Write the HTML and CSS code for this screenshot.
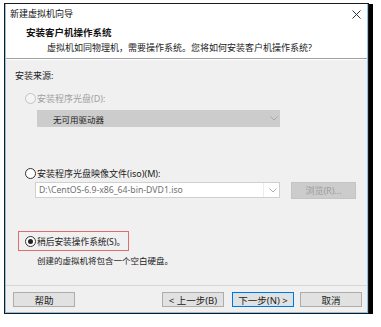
FILE: index.html
```html
<!DOCTYPE html>
<html lang="zh-CN">
<head>
<meta charset="utf-8">
<title>新建虚拟机向导</title>
<link rel="stylesheet" href="styles.css">
</head>
<body>
<div class="stage">
  <div class="win">
    <div class="titlebar">
      <span class="title">新建虚拟机向导</span>
      <svg class="close" width="9" height="9" viewBox="0 0 9 9"><path d="M0.5 0.5L8.5 8.5M8.5 0.5L0.5 8.5" stroke="#333" stroke-width="1" fill="none"/></svg>
    </div>
    <div class="header">
      <div class="h1">安装客户机操作系统</div>
      <div class="h2">虚拟机如同物理机，需要操作系统。您将如何安装客户机操作系统?</div>
    </div>
    <div class="body">
      <div class="label">安装来源:</div>
      <div class="opt disabled"><span class="radio"></span><span>安装程序光盘(D):</span></div>
      <div class="select">
        <span>无可用驱动器</span>
        <svg class="chev" width="8" height="5" viewBox="0 0 8 5"><path d="M0.5 0.5L4 4L7.5 0.5" stroke="#a8a8a8" fill="none"/></svg>
      </div>
      <div class="opt second"><span class="radio"></span><span>安装程序光盘映像文件(iso)(M):</span></div>
      <div class="isorow">
        <div class="combo">
          <span class="path">D:\CentOS-6.9-x86_64-bin-DVD1.iso</span>
          <span class="csep"></span>
          <svg class="chev" width="8" height="5" viewBox="0 0 8 5"><path d="M0.5 0.5L4 4L7.5 0.5" stroke="#b0b0b0" fill="none"/></svg>
        </div>
        <div class="browse">浏览(R)...</div>
      </div>
      <div class="later"><span class="radio checked"></span><span>稍后安装操作系统(S)。</span></div>
      <div class="desc">创建的虚拟机将包含一个空白硬盘。</div>
    </div>
    <div class="footer">
      <div class="btn">帮助</div>
      <div class="spacer"></div>
      <div class="btn">&lt; 上一步(B)</div>
      <div class="btn primary">下一步(N) &gt;</div>
      <div class="btn last">取消</div>
    </div>
  </div>
</div>
</body>
</html>
```

FILE: styles.css
```css
html, body {
  margin: 0;
  padding: 0;
  background: #ffffff;
}
body {
  font-family: "Noto Sans", "Noto Sans CJK SC", sans-serif;
  font-size: 9px;
  color: #222;
}
.stage {
  padding: 3px 0 0 4px;
}
.win {
  width: 363px;
  height: 309px;
  border: 1px solid #1a1a1a;
  box-shadow: inset 0 0 0 1px #8ec1e6, 3px 2px 0 1px #000;
  display: flex;
  flex-direction: column;
  background: #f0f0f0;
}
.titlebar {
  height: 20px;
  flex: none;
  background: #fff;
  display: flex;
  align-items: center;
  padding: 0 0 0 4px;
  margin: 0 1px 0 1px;
}
.title {
  flex: 1;
  line-height: 12px;
  color: #111;
}
.close {
  margin-right: 6px;
}
.header {
  flex: none;
  height: 30px;
  background: #fff;
  padding: 3px 0 1px 20px;
  margin: 0 1px;
  border-bottom: 1px solid #a0a0a0;
  box-shadow: 0 1px 0 #fff;
}
.h1 {
  font-weight: bold;
  font-size: 9.5px;
  line-height: 12px;
  color: #111;
}
.h2 {
  margin: 3px 0 0 21px;
  line-height: 12px;
  color: #222;
}
.body {
  flex: 1;
  padding: 0 0 0 10px;
  margin-top: 1px;
}
.label {
  margin-top: 10px;
  line-height: 12px;
  color: #222;
}
.opt {
  display: flex;
  align-items: center;
  height: 14px;
  margin-top: 9px;
  padding-left: 10px;
}
.opt.second {
  margin-top: 39px;
}
.opt.disabled {
  color: #a0a0a0;
}
.radio {
  width: 9px;
  height: 9px;
  border: 1px solid #333;
  border-radius: 50%;
  background: #fff;
  margin-right: 1px;
  flex: none;
  box-sizing: content-box;
  position: relative;
}
.disabled .radio {
  border-color: #c4c4c4;
  background: #f4f4f4;
}
.radio.checked::after {
  content: "";
  position: absolute;
  left: 2px;
  top: 2px;
  width: 5px;
  height: 5px;
  border-radius: 50%;
  background: #222;
}
.select {
  margin: 5px 0 0 22px;
  width: 243px;
  height: 17px;
  background: #cccccc;
  display: flex;
  align-items: center;
  padding-left: 16px;
  box-sizing: border-box;
  color: #222;
  font-size: 8.5px;
}
.select span {
  flex: 1;
}
.chev {
  margin-right: 2px;
}
.isorow {
  display: flex;
  align-items: flex-start;
  margin: 2px 0 0 20px;
}
.combo {
  width: 245px;
  height: 16px;
  box-sizing: border-box;
  border: 1px solid #cfcfcf;
  background: #fff;
  display: flex;
  align-items: center;
  padding-left: 3px;
  font-size: 8.7px;
}
.path {
  flex: 1;
  color: #707070;
  white-space: nowrap;
}
.csep {
  width: 1px;
  height: 14px;
  background: #ececec;
  margin-right: 5px;
}
.browse {
  margin-left: 11px;
  width: 65px;
  height: 17px;
  box-sizing: border-box;
  background: #cccccc;
  border: 1px solid #c4c4c4;
  color: #9c9c9c;
  display: flex;
  align-items: center;
  justify-content: center;
}
.later {
  display: inline-flex;
  align-items: center;
  height: 18px;
  margin: 32px 0 0 3px;
  padding: 0 3px 0 6px;
  border: 1px solid #e06c6c;
  color: #222;
  font-size: 8.7px;
}
.desc {
  margin: 4px 0 0 22px;
  line-height: 12px;
  color: #222;
  font-size: 8.5px;
}
.footer {
  flex: none;
  height: 20px;
  border-top: 1px solid #d6d6d6;
  padding: 6px 5px 0 7px;
  margin: 0 1px 1px 1px;
  display: flex;
  align-items: flex-start;
  font-size: 9.5px;
}
.spacer {
  flex: 1;
}
.btn {
  width: 62px;
  height: 15px;
  box-sizing: border-box;
  border: 1px solid #adadad;
  background: #e1e1e1;
  display: flex;
  align-items: center;
  justify-content: center;
  color: #222;
  margin-left: 8px;
}
.btn:first-child {
  margin-left: 0;
}
.btn.primary {
  border-color: #0078d7;
  box-shadow: inset 0 0 0 1px #cfe3f6;
}
.btn.last {
  margin-left: 6px;
}
```
